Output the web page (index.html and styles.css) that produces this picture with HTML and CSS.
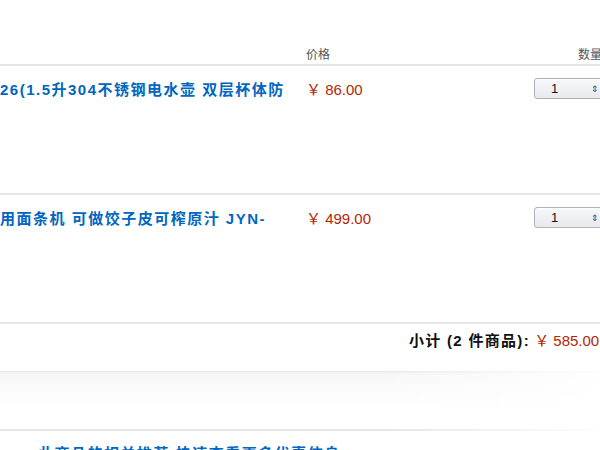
FILE: index.html
```html
<!DOCTYPE html>
<html lang="zh">
<head>
<meta charset="utf-8">
<link rel="stylesheet" href="styles.css">
</head>
<body>
<div class="cart">
  <div class="head">
    <div class="col-title"></div>
    <div class="col-price">价格</div>
    <div class="col-qty">数量</div>
  </div>
  <div class="item">
    <div class="col-title"><a class="title">26(1.5升304不锈钢电水壶 双层杯体防</a></div>
    <div class="col-price"><span class="price">￥ 86.00</span></div>
    <div class="col-qty"><div class="select"><span>1</span><span class="arrows">⇕</span></div></div>
  </div>
  <div class="item">
    <div class="col-title"><a class="title">用面条机 可做饺子皮可榨原汁 JYN-</a></div>
    <div class="col-price"><span class="price">￥ 499.00</span></div>
    <div class="col-qty"><div class="select"><span>1</span><span class="arrows">⇕</span></div></div>
  </div>
  <div class="subtotal">
    <span class="label">小计 (2 件商品):</span> <span class="price">￥ 585.00</span>
  </div>
  <div class="band"></div>
  <div class="next">
    <a class="title more">此商品的相关推荐 快速查看更多优惠信息</a>
  </div>
</div>
</body>
</html>
```
FILE: styles.css
```css
html, body {
  margin: 0;
  padding: 0;
  background: #fff;
  overflow: hidden;
}
body {
  width: 600px;
  height: 450px;
  font-family: "Liberation Sans", Arial, "Noto Sans CJK SC", sans-serif;
  color: #111;
}
.cart {
  width: 700px;
  padding-top: 47px;
}
.head, .item {
  display: grid;
  grid-template-columns: 306px 228px 166px;
}
.head {
  font-size: 12px;
  line-height: 16px;
  color: #555;
  padding-bottom: 1px;
  border-bottom: 2px solid #e6e6e6;
}
.head .col-qty {
  padding-left: 44px;
}
.item {
  height: 127px;
  border-bottom: 2px solid #e6e6e6;
}
.item .col-title, .item .col-price {
  padding-top: 14px;
}
.title {
  display: block;
  color: #0066c0;
  font-weight: bold;
  font-size: 15px;
  line-height: 20px;
  letter-spacing: 1.5px;
  white-space: nowrap;
}
.price {
  color: #b12704;
  font-size: 15px;
  line-height: 20px;
}
.select {
  margin-top: 12px;
  width: 80px;
  height: 21px;
  box-sizing: border-box;
  border: 1px solid #adb1b8;
  border-radius: 3px;
  background: linear-gradient(#f7f8fa, #e7e9ec);
  box-shadow: 0 1px 0 rgba(255,255,255,.6) inset;
  display: flex;
  align-items: center;
  justify-content: space-between;
  font-size: 13px;
  color: #111;
  padding: 0 14px 0 16px;
}
.arrows {
  font-size: 9px;
  color: #444;
}
.subtotal {
  padding-left: 409px;
  padding-top: 7px;
  height: 40px;
  font-size: 15px;
  line-height: 20px;
  white-space: nowrap;
}
.subtotal .label {
  font-weight: bold;
  letter-spacing: 1.3px;
}
.band {
  height: 58px;
  border-bottom: 2px solid #e6e6e6;
  background: linear-gradient(to bottom, rgba(0,0,0,0.09) 0, rgba(0,0,0,0.035) 3px, rgba(0,0,0,0.02) 14px, transparent 40px);
  -webkit-mask-image: linear-gradient(to right, #000 0, #000 380px, transparent 620px);
  mask-image: linear-gradient(to right, #000 0, #000 380px, transparent 620px);
  width: 600px;
}
.next {
  padding-top: 13px;
  padding-left: 38px;
}
.more {
  font-size: 15px;
}
```
